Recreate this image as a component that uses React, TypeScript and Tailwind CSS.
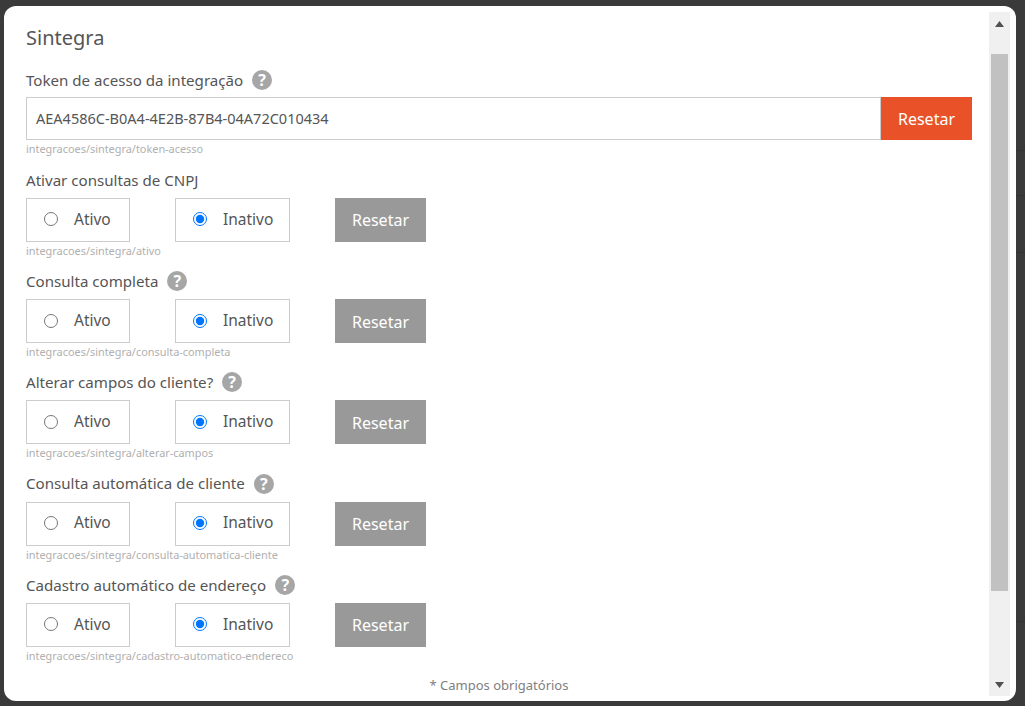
import { useState } from "react";

const font = "font-['Noto_Sans','Open_Sans',sans-serif]";

type Field = { label: string; path: string; help?: boolean };

const fields: Field[] = [
  { label: "Ativar consultas de CNPJ", path: "integracoes/sintegra/ativo" },
  { label: "Consulta completa", path: "integracoes/sintegra/consulta-completa", help: true },
  { label: "Alterar campos do cliente?", path: "integracoes/sintegra/alterar-campos", help: true },
  { label: "Consulta automática de cliente", path: "integracoes/sintegra/consulta-automatica-cliente", help: true },
  { label: "Cadastro automático de endereço", path: "integracoes/sintegra/cadastro-automatico-endereco", help: true },
];

function Help() {
  return (
    <span className="ml-[9px] flex h-5 w-5 items-center justify-center rounded-full bg-[#a6a6a6] text-[16px] font-bold leading-none text-white">
      ?
    </span>
  );
}

function RadioBox({ label, name, checked, onPick, width }: { label: string; name: string; checked: boolean; onPick: () => void; width: string }) {
  return (
    <label className={`flex h-[44px] items-center gap-[16px] border border-[#cccccc] pb-[1px] pl-[17px] text-[15.5px] text-[#555555] ${width}`}>
      <input type="radio" name={name} checked={checked} onChange={onPick} className="m-0 h-[14px] w-[14px]" />
      {label}
    </label>
  );
}

function RadioField({ field }: { field: Field }) {
  const [active, setActive] = useState(false);
  return (
    <div className="mt-[13.25px]">
      <div className="flex h-[20px] items-center text-[15.1px] text-[#555555]">
        {field.label}
        {field.help && <Help />}
      </div>
      <div className="mt-[8px] flex gap-[45px]">
        <RadioBox label="Ativo" name={field.path} checked={active} onPick={() => setActive(true)} width="w-[104px]" />
        <RadioBox label="Inativo" name={field.path} checked={!active} onPick={() => setActive(false)} width="w-[115px]" />
        <button className="h-[44px] w-[91px] bg-[#999999] pt-[1px] text-[16px] text-white">Resetar</button>
      </div>
      <div className="mt-[1px] h-[15px] text-[10.9px] leading-[15px] text-[#b0b0b0]">{field.path}</div>
    </div>
  );
}

export default function App() {
  return (
    <div className={`relative h-[706px] overflow-hidden bg-[#3a3a3a] pl-1 pt-[6px] ${font}`}>
      {/* page behind the overlay, only its rules show at the edge */}
      <div className="absolute left-[1016px] right-0 top-[150px] h-px bg-[#333333]" />
      <div className="absolute left-[1016px] right-0 top-[195px] h-px bg-[#333333]" />
      <div className="absolute left-[1016px] right-0 top-[252px] h-px bg-[#333333]" />
      <div className="absolute left-[1016px] right-0 top-[621px] h-px bg-[#333333]" />
      <div className="relative flex h-[695px] w-[1012px] rounded-[12px] bg-white">
        <div className="flex-1 pl-[22px] pr-[17px]">
          <h2 className="mt-[20px] h-[24px] text-[20px] leading-[24px] text-[#555555]">Sintegra</h2>
          <div className="mt-[20px] flex h-[20px] items-center text-[15.1px] text-[#555555]">
            Token de acesso da integração
            <Help />
          </div>
          <div className="mt-[7px] flex h-[43px]">
            <input
              readOnly
              value="AEA4586C-B0A4-4E2B-87B4-04A72C010434"
              className="min-w-0 flex-1 border border-[#cccccc] px-[9px] text-[14.5px] text-[#555555] outline-none"
            />
            <button className="w-[91px] bg-[#e95228] text-[16px] text-white">Resetar</button>
          </div>
          <div className="mt-[1px] h-[15.6px] text-[10.9px] leading-[15px] text-[#b0b0b0]">integracoes/sintegra/token-acesso</div>
          {fields.map((f) => (
            <RadioField key={f.path} field={f} />
          ))}
          <p className="mt-[13px] text-center text-[13px] text-[#808080]">* Campos obrigatórios</p>
        </div>
        <div className="mr-[6px] mt-[6px] flex h-[684px] w-[21px] flex-col items-center bg-[#f0f0f0]">
          <div className="flex h-[42px] w-full justify-center pt-[9px]">
            <svg width="9" height="6" viewBox="0 0 9 6"><path d="M4.5 0 9 6H0z" fill="#505050" /></svg>
          </div>
          <div className="h-[537px] w-[17px] bg-[#c1c1c1]" />
          <div className="flex w-full flex-1 justify-center pt-[91px]">
            <svg width="9" height="6" viewBox="0 0 9 6"><path d="M0 0h9L4.5 6z" fill="#505050" /></svg>
          </div>
        </div>
      </div>
    </div>
  );
}
